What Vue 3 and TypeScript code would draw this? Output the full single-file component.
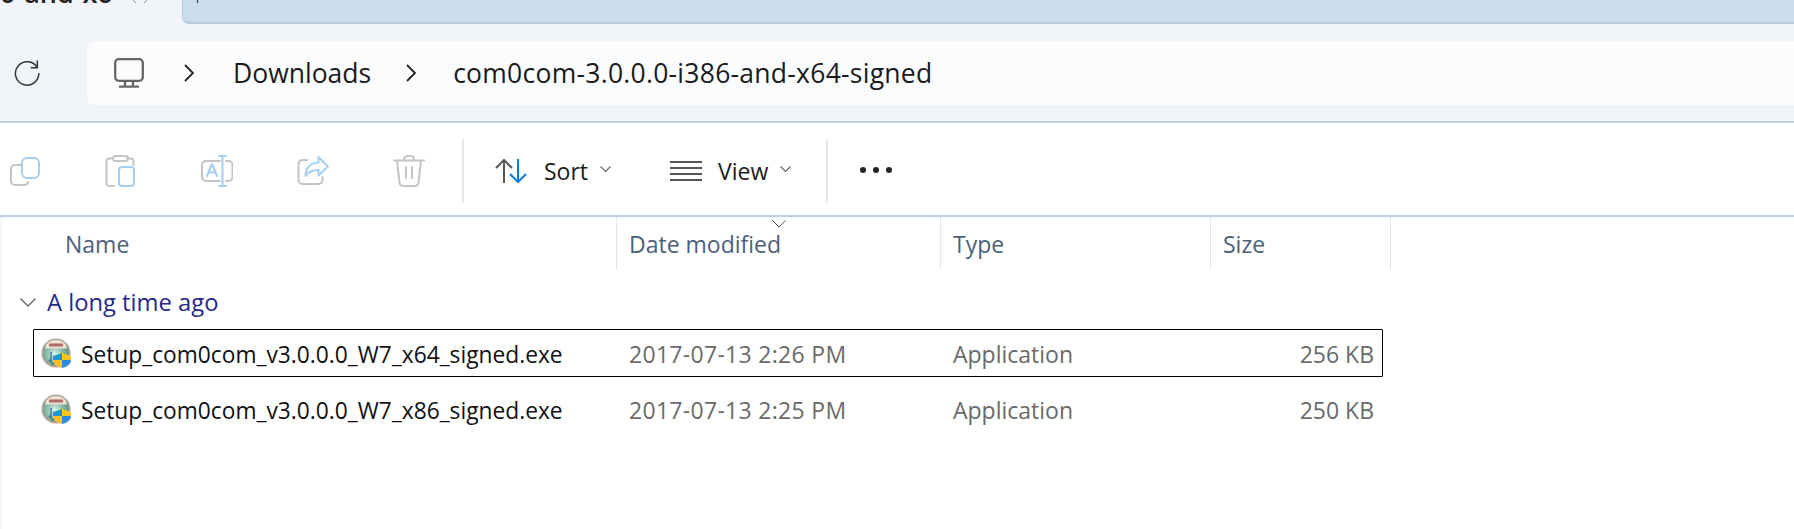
<script setup lang="ts">
interface FileRow {
  name: string
  date: string
  type: string
  size: string
  selected: boolean
}

const files: FileRow[] = [
  { name: 'Setup_com0com_v3.0.0.0_W7_x64_signed.exe', date: '2017-07-13 2:26 PM', type: 'Application', size: '256 KB', selected: true },
  { name: 'Setup_com0com_v3.0.0.0_W7_x86_signed.exe', date: '2017-07-13 2:25 PM', type: 'Application', size: '250 KB', selected: false }
]
</script>

<template>
  <div class="explorer">
    <header class="nav">
      <div class="tabs">
        <span class="tab-title">0-and-x6</span>
        <svg class="tab-close" width="20" height="4" viewBox="0 0 20 4"><path d="M3 0l3 3M17 0l-3 3" /></svg>
        <div class="search-tab"><i class="caret"></i></div>
      </div>
      <div class="pathbar">
        <svg class="refresh" width="26" height="26" viewBox="0 0 26 26">
          <path d="M23.300 7.700A11.700 11.700 0 1 0 24.800 13M16.700 7.700h6.600V.5" />
        </svg>
        <div class="address">
          <svg class="pc" width="30" height="30" viewBox="0 0 30 30">
            <rect x="1.2" y="1.2" width="27.6" height="21.6" rx="3.5" />
            <path d="M11 23v5M19 23v5M5 28.6h20" />
          </svg>
          <svg class="crumb-chevron first" width="10" height="18" viewBox="0 0 10 18"><path d="M1 1l8 8-8 8" /></svg>
          <span class="crumb">Downloads</span>
          <svg class="crumb-chevron" width="10" height="18" viewBox="0 0 10 18"><path d="M1 1l8 8-8 8" /></svg>
          <span class="crumb long">com0com-3.0.0.0-i386-and-x64-signed</span>
        </div>
      </div>
    </header>

    <div class="toolbar">
      <div class="icon-btn">
        <svg width="32" height="32" viewBox="0 0 32 32">
          <path class="grey" d="M12 10H6a4 4 0 0 0-4 4v12a4 4 0 0 0 4 4h9a4 4 0 0 0 4-3" />
          <rect class="blue" x="13" y="3" width="17" height="20" rx="5" />
        </svg>
      </div>
      <div class="icon-btn">
        <svg width="32" height="32" viewBox="0 0 32 32">
          <path class="grey" d="M9 31H4.500A3 3 0 0 1 1.500 28V6.500a3 3 0 0 1 3-3H8M22 3.500h3.500a3 3 0 0 1 3 3V10" />
          <rect class="grey" x="8" y="1" width="15" height="5" rx="2.500" />
          <rect class="blue" x="14" y="12" width="15" height="19" rx="3" />
        </svg>
      </div>
      <div class="icon-btn">
        <svg width="32" height="32" viewBox="0 0 32 32">
          <path class="grey" d="M19 6H5a4 4 0 0 0-4 4v12a4 4 0 0 0 4 4h14M25 6h2.500a4 4 0 0 1 4 4v12a4 4 0 0 1-4 4H25" />
          <path class="blue" d="M6 21l5-12 5 12M7.800 17.500h6.400M18 1h7M18 31h7M21.500 1v30" />
        </svg>
      </div>
      <div class="icon-btn">
        <svg width="32" height="32" viewBox="0 0 32 32">
          <path class="grey" d="M10 5H5.500A4 4 0 0 0 1.500 9v16a4 4 0 0 0 4 4h16a4 4 0 0 0 4-4v-3" />
          <path class="blue" d="M21.500 2l9.500 9.500-9.500 9v-5.500c-6 0-10 1-13 6 0-8 5-13 13-13.500z" />
        </svg>
      </div>
      <div class="icon-btn">
        <svg width="32" height="32" viewBox="0 0 32 32">
          <path class="grey" d="M1 5.500h30M11 5.500V4.500A3.500 3.500 0 0 1 14.500 1h3A3.500 3.500 0 0 1 21 4.500v1M4 5.500l2.500 22A3.500 3.500 0 0 0 10 31h12a3.500 3.500 0 0 0 3.500-3.500l2.500-22M13 12v11M19 12v11" />
        </svg>
      </div>
      <span class="tool-sep first"></span>
      <div class="tool-btn sort">
        <svg width="32" height="24" viewBox="0 0 32 24">
          <path class="dark" d="M9 24V1M1 9l8-8 8 8" />
          <path class="accent" d="M23 0v23M15 15l8 8 8-8" />
        </svg>
        <span>Sort</span>
        <svg class="down" width="11" height="7" viewBox="0 0 11 7"><path d="M.5.500l5 5 5-5" /></svg>
      </div>
      <div class="tool-btn view">
        <svg width="32" height="20" viewBox="0 0 32 20">
          <path class="dark" d="M0 1h32M0 7h32M0 13h32M0 19h32" />
        </svg>
        <span>View</span>
        <svg class="down" width="11" height="7" viewBox="0 0 11 7"><path d="M.5.500l5 5 5-5" /></svg>
      </div>
      <span class="tool-sep"></span>
      <div class="more"><i></i><i></i><i></i></div>
    </div>

    <main class="list">
      <div class="columns">
        <div class="col col-name">Name</div>
        <div class="col col-date">
          Date modified
          <svg class="sort-mark" width="14" height="8" viewBox="0 0 14 8"><path d="M.5.500L7 7 13.500.500" /></svg>
        </div>
        <div class="col col-type">Type</div>
        <div class="col col-size">Size</div>
      </div>

      <div class="group">
        <svg width="16" height="9" viewBox="0 0 16 9"><path d="M.5.500L8 8 15.500.500" /></svg>
        <span>A long time ago</span>
      </div>

      <div v-for="file in files" :key="file.name" :class="['row', { selected: file.selected }]">
        <div class="cell-name">
          <svg class="exe" width="30" height="30" viewBox="0 0 30 30">
            <defs>
              <radialGradient id="globe" cx="45%" cy="55%" r="55%">
                <stop offset="0" stop-color="#e4f3ee" />
                <stop offset="0.65" stop-color="#7fb9a6" />
                <stop offset="1" stop-color="#5f8f80" />
              </radialGradient>
            </defs>
            <circle cx="15" cy="15" r="14.500" fill="#aaa59a" />
            <circle cx="15" cy="15" r="12.500" fill="url(#globe)" />
            <path d="M5 7A12.500 12.500 0 0 1 25 7l.8 3.500H4.200z" fill="#efe3d3" />
            <rect x="8" y="5.500" width="14" height="3" fill="#a04a50" opacity="0.8" />
            <path d="M10 14v9l-2-1 4 4 2-2" fill="none" stroke="#3f7f92" stroke-width="1.500" />
            <path d="M21 15l-9 3v4h9z" fill="#2d8ed8" />
            <path d="M21 15l9 3v4h-9z" fill="#f8c41a" />
            <path d="M12 22c0 4 4 7 9 8v-8z" fill="#f8c41a" />
            <path d="M30 22c0 4-4 7-9 8v-8z" fill="#2d8ed8" />
          </svg>
          <span>{{ file.name }}</span>
        </div>
        <div class="cell-date">{{ file.date }}</div>
        <div class="cell-type">{{ file.type }}</div>
        <div class="cell-size">{{ file.size }}</div>
      </div>
    </main>
  </div>
</template>

<style scoped>
.explorer {
  width: 1794px;
  height: 529px;
  overflow: hidden;
  background: #fff;
  font-family: "Open Sans", "Noto Sans", sans-serif;
  color: #1b1b1b;
  display: flex;
  flex-direction: column;
}

.nav {
  height: 123px;
  box-sizing: border-box;
  flex: none;
  background: #f1f5f9;
  border-bottom: 2px solid #bccfe0;
}

.tabs {
  height: 24px;
  display: flex;
  align-items: flex-start;
  overflow: hidden;
}

.tab-title {
  width: 130px;
  flex: none;
  margin-top: -25px;
  font-size: 27px;
  line-height: 36px;
  font-weight: 600;
  color: #222;
  white-space: nowrap;
}

.tab-close {
  flex: none;
  margin-right: 32px;
  fill: none;
  stroke: #999;
}

.search-tab {
  flex: 1;
  height: 24px;
  box-sizing: border-box;
  background: #cbdcea;
  border: 1px solid #b7cbdd;
  border-top: none;
  border-right: none;
  border-bottom-width: 2px;
  border-bottom-left-radius: 7px;
  padding-left: 14px;
}

.caret {
  display: block;
  width: 1px;
  height: 3px;
  background: #333;
}

.pathbar {
  display: flex;
  align-items: center;
  margin-top: 17px;
  height: 64px;
  padding-left: 14px;
}

.refresh {
  flex: none;
  fill: none;
  stroke: #333;
  stroke-width: 1.500;
}

.address {
  flex: 1;
  display: flex;
  align-items: center;
  height: 64px;
  margin-left: 47px;
  padding-left: 27px;
  background: #fbfcfe;
  border-radius: 8px 0 0 8px;
  font-size: 26.500px;
  white-space: nowrap;
}

.crumb {
  margin-top: -1px;
}

.crumb.long {
  letter-spacing: 0.26px;
}

.pc {
  flex: none;
  fill: none;
  stroke: #666;
  stroke-width: 2.300;
}

.crumb-chevron {
  flex: none;
  margin: 0 37px 0 35px;
  fill: none;
  stroke: #222;
  stroke-width: 1.800;
}

.crumb-chevron.first {
  margin: 0 39px 0 40px;
}

.toolbar {
  height: 94px;
  flex: none;
  box-sizing: border-box;
  display: flex;
  align-items: center;
  padding-left: 9px;
  padding-top: 4px;
  border-bottom: 2px solid #bccfe0;
  font-size: 23px;
}

.icon-btn {
  width: 32px;
  height: 32px;
  margin-right: 64px;
  flex: none;
}

.icon-btn svg {
  display: block;
  fill: none;
  stroke-width: 2;
  stroke-linecap: round;
  stroke-linejoin: round;
}

.grey {
  stroke: #c4c4c4;
}

.blue {
  stroke: #a3d0f2;
}

.tool-sep {
  width: 2px;
  height: 64px;
  background: #e8e8e8;
  flex: none;
}

.tool-sep.first {
  margin-left: -27px;
}

.tool-btn {
  display: flex;
  align-items: center;
  flex: none;
}

.tool-btn svg {
  flex: none;
  fill: none;
  stroke-width: 2;
}

.tool-btn .dark {
  stroke: #555;
}

.tool-btn .accent {
  stroke: #0f7ad6;
}

.tool-btn span {
  margin-left: 17px;
}

.tool-btn .down {
  margin-left: 12px;
  margin-top: -4px;
  stroke: #666;
  stroke-width: 1.200;
}

.sort {
  margin-left: 31px;
}

.view {
  margin-left: 59px;
}

.view span {
  margin-left: 16px;
}

.view + .tool-sep {
  margin-left: 35px;
}

.more {
  display: flex;
  gap: 7px;
  margin-left: 32px;
  margin-top: -2px;
}

.more i {
  width: 6px;
  height: 6px;
  border-radius: 50%;
  background: #222;
}

.list {
  flex: 1;
  border-left: 2px solid #f5f5f5;
}

.columns {
  display: grid;
  grid-template-columns: 615px 324px 270px 180px;
  height: 53px;
  font-size: 23px;
  color: #4c607a;
}

.col {
  position: relative;
  display: flex;
  align-items: center;
  box-sizing: border-box;
  border-right: 1px solid #e5e5e5;
  padding-left: 12px;
  white-space: nowrap;
}

.col-name {
  padding-left: 63px;
}

.sort-mark {
  position: absolute;
  top: 3px;
  left: 155px;
  fill: none;
  stroke: #555;
}

.group {
  display: flex;
  align-items: center;
  height: 34px;
  margin-top: 15px;
  padding-left: 18px;
  font-size: 23.750px;
  color: #27288a;
}

.group svg {
  flex: none;
  margin-right: 11px;
  fill: none;
  stroke: #666;
  stroke-width: 1.300;
}

.row {
  display: grid;
  grid-template-columns: 595px 324px 258px 171px;
  align-items: center;
  width: 1350px;
  height: 48px;
  box-sizing: border-box;
  margin-left: 31px;
  margin-top: 8px;
  padding-top: 2px;
  border: 1px solid transparent;
  font-size: 23px;
  color: #6a6a6a;
  white-space: nowrap;
}

.group + .row {
  margin-top: 10px;
}

.row.selected {
  border-color: #000;
  border-radius: 1px;
}

.cell-name {
  display: flex;
  align-items: center;
  padding-left: 7px;
  color: #111;
  font-size: 22.750px;
}

.exe {
  flex: none;
  margin-top: -2px;
  margin-right: 10px;
}

.cell-date {
  letter-spacing: 0.3px;
}

.cell-size {
  text-align: right;
  padding-right: 8px;
}
</style>

<style>
html,
body {
  background: #fff;
}
</style>
